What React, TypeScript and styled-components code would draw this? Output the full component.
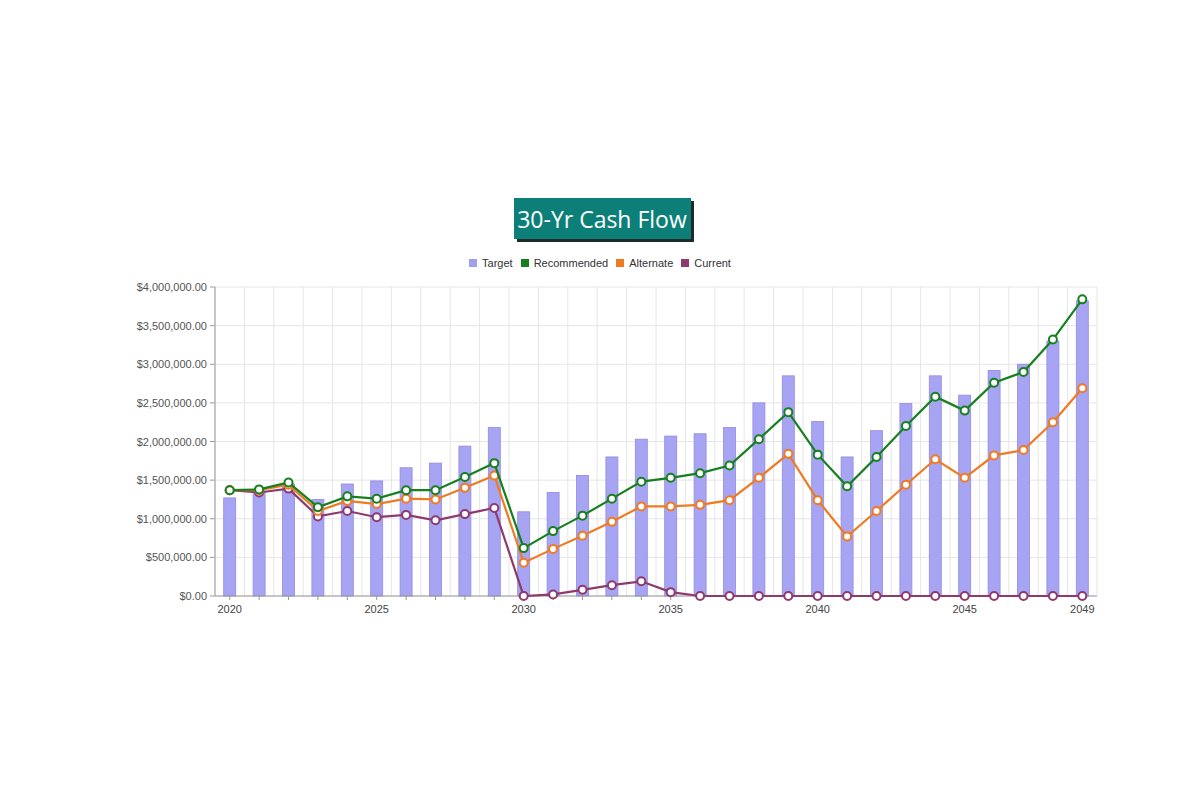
import React from "react";
import styled, { createGlobalStyle } from "styled-components";

const Global = createGlobalStyle`
  html, body { margin: 0; background: #fff; }
  body { font-family: "Liberation Sans", Arial, sans-serif; }
`;

const Page = styled.div`
  width: 1200px; height: 806px; display: flex; flex-direction: column; align-items: center;
  padding-top: 198px; box-sizing: border-box;
`;
const Title = styled.div`
  background: #0d7f79; color: #fff; font-family: "Open Sans", sans-serif; font-size: 23px;
  padding: 0 0; width: 177px; height: 41px; display: flex; align-items: center; justify-content: center;
  box-shadow: 3px 3px 0 #1d2b2b; margin-left: 4px;
`;
const Legend = styled.div`
  display: flex; gap: 8px; margin-top: 17px; font-size: 11px; color: #333; height: 14px; align-items: center;
`;
const Item = styled.div`display: flex; align-items: center; gap: 5px;`;
const Swatch = styled.span<{ $c: string }>`width: 8px; height: 8px; background: ${p => p.$c};`;
const Chart = styled.svg`display: block; margin-top: 8px;`;

const target = [1.27,1.36,1.45,1.25,1.45,1.49,1.66,1.72,1.94,2.18,1.09,1.34,1.56,1.8,2.03,2.07,2.1,2.18,2.5,2.85,2.26,1.8,2.14,2.49,2.85,2.6,2.92,3.0,3.3,3.82];
const rec = [1.37,1.38,1.47,1.15,1.29,1.26,1.37,1.37,1.54,1.72,0.62,0.84,1.04,1.26,1.48,1.53,1.59,1.69,2.03,2.38,1.83,1.42,1.8,2.2,2.58,2.4,2.76,2.9,3.32,3.84];
const alt = [1.37,1.37,1.44,1.1,1.23,1.19,1.26,1.25,1.4,1.56,0.43,0.61,0.78,0.96,1.16,1.16,1.18,1.24,1.53,1.84,1.24,0.77,1.1,1.44,1.77,1.53,1.82,1.89,2.25,2.69];
const cur = [1.37,1.34,1.39,1.03,1.1,1.02,1.05,0.98,1.06,1.14,0,0.02,0.08,0.14,0.19,0.05,0,0,0,0,0,0,0,0,0,0,0,0,0,0];

const X0 = 215, X1 = 1097, TOP = 9, BOT = 318;
const cw = (X1 - X0) / 30;
const cx = (i: number) => X0 + cw * (i + 0.5);
const yv = (v: number) => BOT - (v / 4) * (BOT - TOP);
const labels = ["$0.00","$500,000.00","$1,000,000.00","$1,500,000.00","$2,000,000.00","$2,500,000.00","$3,000,000.00","$3,500,000.00","$4,000,000.00"];

const Series = ({ d, c }: { d: number[]; c: string }) => (
  <g>
    <polyline points={d.map((v, i) => `${cx(i)},${yv(v)}`).join(" ")} fill="none" stroke={c} strokeWidth={2.2} />
    {d.map((v, i) => <circle key={i} cx={cx(i)} cy={yv(v)} r={4} fill="#fff" stroke={c} strokeWidth={2} />)}
  </g>
);

export default function App() {
  return (
    <>
      <Global />
      <Page>
        <Title>30-Yr Cash Flow</Title>
        <Legend>
          <Item><Swatch $c="#a49ef0" />Target</Item>
          <Item><Swatch $c="#16801e" />Recommended</Item>
          <Item><Swatch $c="#f07a20" />Alternate</Item>
          <Item><Swatch $c="#8e3a6c" />Current</Item>
        </Legend>
        <Chart width={1200} height={340} viewBox="0 0 1200 340">
          {labels.map((l, i) => (
            <g key={l}>
              <line x1={X0} x2={X1} y1={yv(i * 0.5)} y2={yv(i * 0.5)} stroke="#e6e6e6" />
              <line x1={X0 - 5} x2={X0} y1={yv(i * 0.5)} y2={yv(i * 0.5)} stroke="#999" />
              <text x={X0 - 8} y={yv(i * 0.5) + 4} textAnchor="end" fontSize={11} fill="#555">{l}</text>
            </g>
          ))}
          {Array.from({ length: 31 }, (_, i) => (
            <line key={i} x1={X0 + cw * i} x2={X0 + cw * i} y1={TOP} y2={BOT} stroke="#e6e6e6" />
          ))}
          {target.map((v, i) => (
            <rect key={i} x={cx(i) - 6} y={yv(v)} width={12} height={BOT - yv(v)} fill="#a8a4f4" stroke="#8f8ae0" strokeWidth={0.8} />
          ))}
          <line x1={X0} x2={X0} y1={TOP} y2={BOT} stroke="#999" />
          <line x1={X0} x2={X1} y1={BOT} y2={BOT} stroke="#999" />
          {Array.from({ length: 30 }, (_, i) => (
            <line key={i} x1={cx(i)} x2={cx(i)} y1={BOT} y2={BOT + 4} stroke="#999" />
          ))}
          <Series d={cur} c="#8e3a6c" />
          <Series d={alt} c="#f07a20" />
          <Series d={rec} c="#16801e" />
          {[0, 5, 10, 15, 20, 25, 29].map(i => (
            <text key={i} x={cx(i)} y={BOT + 17} textAnchor="middle" fontSize={11} fill="#444">{2020 + i}</text>
          ))}
        </Chart>
      </Page>
    </>
  );
}
